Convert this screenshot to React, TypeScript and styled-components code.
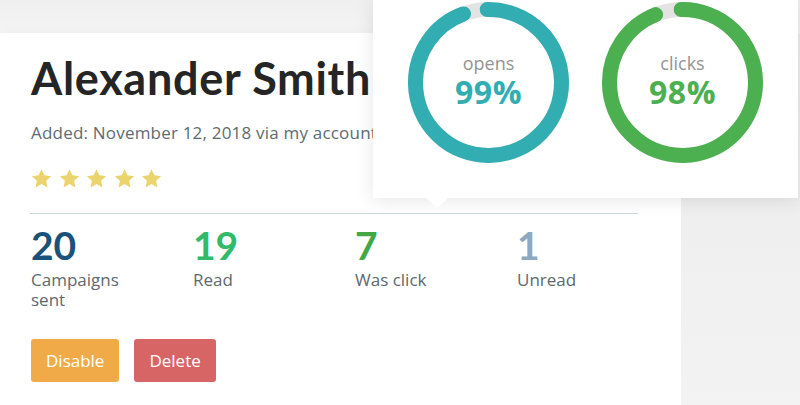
import React from 'react'
import styled, { createGlobalStyle } from 'styled-components'

const GlobalStyle = createGlobalStyle`
  html, body {
    margin: 0;
    padding: 0;
    background: #efefef;
  }
  body {
    font-family: 'Open Sans', 'Noto Sans', sans-serif;
  }
`

const stats = [
  { value: '20', label: 'Campaigns sent', color: '#1b527c' },
  { value: '19', label: 'Read', color: '#2fbb6a' },
  { value: '7', label: 'Was click', color: '#43a843' },
  { value: '1', label: 'Unread', color: '#8da8bf' }
]

const rings = [
  { label: 'opens', pct: 99, color: '#32adb1' },
  { label: 'clicks', pct: 98, color: '#4caf50' }
]

const Star: FC = () => (
  <svg width="21" height="21" viewBox="0 0 24 23">
    <path
      d="M12 0.8l3.3 7.1 7.7 0.9-5.7 5.3 1.5 7.6L12 17.9l-6.8 3.8 1.5-7.6L1 8.8l7.7-0.9z"
      fill="#ebd36e"
    />
  </svg>
)

const Ring: FC<{ label: string; pct: number; color: string }> = ({ label, pct, color }) => {
  const r = 73
  const c = 2 * Math.PI * r
  const gap = 23 + (100 - pct) * 2
  return (
    <RingBox>
      <svg width="161" height="161" viewBox="0 0 161 161">
        <circle cx="80.5" cy="80.5" r={r} fill="none" stroke="#e3e3e3" strokeWidth="15" />
        <circle
          cx="80.5"
          cy="80.5"
          r={r}
          fill="none"
          stroke={color}
          strokeWidth="15"
          strokeLinecap="round"
          strokeDasharray={`${c - gap} ${gap}`}
          transform="rotate(-91 80.5 80.5)"
        />
      </svg>
      <RingText>
        <RingLabel>{label}</RingLabel>
        <RingValue color={color}>{pct}%</RingValue>
      </RingText>
    </RingBox>
  )
}

export default function App() {
  return (
    <Page>
      <GlobalStyle />
      <TopBand />
      <Main>
        <Card>
          <Name>Alexander Smith</Name>
          <Added>Added: November 12, 2018 via my account</Added>
          <Stars>
            {[0, 1, 2, 3, 4].map((i) => (
              <Star key={i} />
            ))}
          </Stars>
          <Divider />
          <StatsRow>
            {stats.map((s) => (
              <Stat key={s.label}>
                <StatValue color={s.color}>{s.value}</StatValue>
                <StatLabel>{s.label}</StatLabel>
              </Stat>
            ))}
          </StatsRow>
          <Buttons>
            <Button bg="#f0ab48">Disable</Button>
            <Button bg="#d76566">Delete</Button>
          </Buttons>
        </Card>
        <Side />
      </Main>
      <Popup>
        {rings.map((r) => (
          <Ring key={r.label} {...r} />
        ))}
        <Arrow />
      </Popup>
    </Page>
  )
}

const Page = styled.div`
  position: relative;
  width: 800px;
  height: 405px;
  overflow: hidden;
  display: flex;
  flex-direction: column;
  background: #efefef;
`
const TopBand = styled.div`
  height: 33px;
  flex-shrink: 0;
  background: linear-gradient(180deg, #efefef 0%, #f4f4f4 100%);
`
const Main = styled.div`
  flex: 1;
  display: flex;
`
const Card = styled.div`
  width: 681px;
  background: #fff;
  padding: 18px 30px 0 31px;
  box-sizing: border-box;
  box-shadow: 4px 0 12px rgba(0, 0, 0, 0.04);
`
const Side = styled.div`
  flex: 1;
  background: linear-gradient(180deg, #ebebeb 0%, #f3f3f3 100%);
`
const Name = styled.h1`
  margin: 0;
  font-family: 'Lato', sans-serif;
  font-weight: 700;
  font-size: 45px;
  line-height: 54px;
  color: #252525;
  letter-spacing: 0.7px;
`
const Added = styled.div`
  margin-top: 18px;
  font-size: 17px;
  letter-spacing: 0.2px;
  color: #5d6b71;
  line-height: 20px;
  white-space: nowrap;
`
const Stars = styled.div`
  margin-top: 25px;
  display: flex;
  gap: 6.5px;
  height: 21px;
`
const Divider = styled.div`
  margin-top: 24px;
  width: 608px;
  height: 1px;
  background: #cdd8dc;
  margin-left: -1px;
`
const StatsRow = styled.div`
  margin-top: 11px;
  display: grid;
  grid-template-columns: repeat(4, 162px);
`
const Stat = styled.div`
  display: flex;
  flex-direction: column;
`
const StatValue = styled.div<{ color: string }>`
  font-family: 'Lato', sans-serif;
  font-size: 39px;
  font-weight: 700;
  line-height: 40px;
  color: ${({ color }) => color};
`
const StatLabel = styled.div`
  margin-top: 5px;
  font-size: 17px;
  line-height: 20px;
  color: #5d686e;
  max-width: 100px;
`
const Buttons = styled.div`
  margin-top: 29px;
  display: flex;
  gap: 15px;
`
const Button = styled.button<{ bg: string }>`
  height: 43px;
  padding: 0 15px;
  border: none;
  border-radius: 3px;
  background: ${({ bg }) => bg};
  color: #fff;
  font-family: 'Open Sans', sans-serif;
  font-size: 17px;
`
const Popup = styled.div`
  position: absolute;
  left: 373px;
  top: 0;
  width: 425px;
  height: 198px;
  background: #fff;
  box-shadow: 0 2px 18px rgba(0, 0, 0, 0.1);
  display: flex;
  align-items: flex-start;
  gap: 33px;
  padding: 2px 0 0 35px;
  box-sizing: border-box;
`
const Arrow = styled.div`
  position: absolute;
  left: 53px;
  bottom: -10px;
  width: 0;
  height: 0;
  border-left: 11px solid transparent;
  border-right: 11px solid transparent;
  border-top: 10px solid #fff;
`
const RingBox = styled.div`
  position: relative;
  width: 161px;
  height: 161px;
`
const RingText = styled.div`
  position: absolute;
  inset: 0;
  display: flex;
  flex-direction: column;
  align-items: center;
  justify-content: center;
  font-family: 'Open Sans', sans-serif;
  padding-bottom: 2px;
`
const RingLabel = styled.div`
  font-size: 18px;
  line-height: 20px;
  color: #939393;
`
const RingValue = styled.div<{ color: string }>`
  font-size: 32px;
  line-height: 38px;
  font-weight: 700;
  letter-spacing: 0.5px;
  color: ${({ color }) => color};
`
